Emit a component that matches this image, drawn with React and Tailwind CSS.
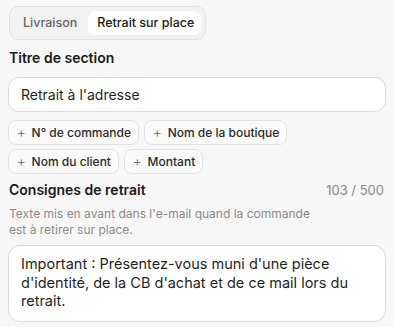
import React from "react";

function Chip({ label }) {
  return (
    <button className="flex items-center gap-[6px] h-[25px] pl-[8px] pr-[7px] rounded-[8px] border border-[#e2e2e2] bg-[#fafafa] text-[12px] text-[#2b2b2b] font-medium">
      <span className="text-[#777] text-[13px] font-normal leading-none">+</span>
      <span>{label}</span>
    </button>
  );
}

export default function App() {
  return (
    <div className="w-[394px] h-[327px] bg-[#f7f7f7] px-[8px] pt-[6px] overflow-hidden" style={{ fontFamily: "Inter, 'Noto Sans', sans-serif" }}>
      <div className="inline-flex items-center p-[4px] gap-[2px] rounded-[9px] border border-[#e2e2e2] bg-[#f2f2f2] ml-[1px]">
        <button className="px-[9px] h-[24px] text-[12.5px] font-medium text-[#666]">Livraison</button>
        <button className="pl-[9px] pr-[7px] h-[24px] text-[12.5px] font-medium text-[#1a1a1a] bg-white rounded-[7px]">Retrait sur place</button>
      </div>
      <div className="mt-[8px] ml-[1px] text-[14px] font-semibold text-[#1a1a1a] leading-[20px]">Titre de section</div>
      <div className="mt-[9px] h-[35px] rounded-[11px] border border-[#d9d9d9] bg-white flex items-center px-[12px] text-[14px] text-[#1f1f1f]">
        Retrait à l'adresse
      </div>
      <div className="mt-[8px] flex flex-wrap gap-x-[5px] gap-y-[4px]">
        <Chip label="N° de commande" />
        <Chip label="Nom de la boutique" />
        <Chip label="Nom du client" />
        <Chip label="Montant" />
      </div>
      <div className="mt-[6px] flex items-center justify-between h-[20px]">
        <div className="ml-[1px] text-[14px] font-semibold text-[#1a1a1a] leading-[20px]">Consignes de retrait</div>
        <div className="text-[13px] text-[#888] mr-[2px] leading-[20px]">103 / 500</div>
      </div>
      <div className="mt-[6px] ml-[1px] text-[12px] text-[#8a8a8a] leading-[16px] w-[320px]">
        Texte mis en avant dans l'e-mail quand la commande est à retirer sur place.
      </div>
      <div className="mt-[7px] h-[77px] rounded-[12px] border border-[#d9d9d9] bg-white pl-[12px] pr-[16px] pt-[9px] text-[14.5px] leading-[18.5px] text-[#1f1f1f]">
        Important : Présentez-vous muni d'une pièce d'identité, de la CB d'achat et de ce mail lors du retrait.
      </div>
    </div>
  );
}
